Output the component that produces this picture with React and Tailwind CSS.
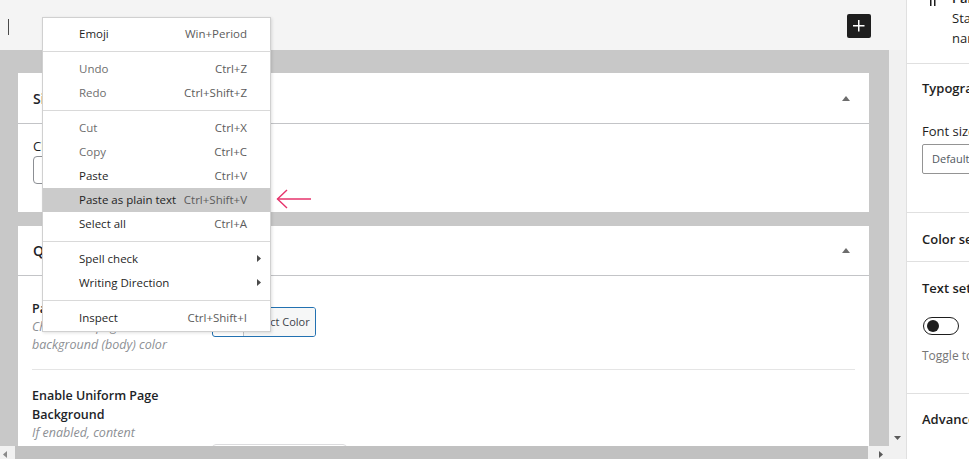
import React from "react";

function Tri() {
  return (
    <svg width="8" height="5" viewBox="0 0 8 5" className="shrink-0">
      <polygon points="0,5 4,0 8,5" fill="#6d6d6d" />
    </svg>
  );
}

function MenuItem({ label, shortcut, disabled, active, submenu }) {
  return (
    <div
      className={
        "relative flex h-6 items-center justify-between pl-[36px] pr-[23px] " +
        (active ? "bg-[#cbcbcb]" : "")
      }
    >
      <span className={disabled ? "text-[#6e6e6e]" : "text-[#1f1f1f]"}>{label}</span>
      {shortcut ? <span className="text-[#5c5c5c]">{shortcut}</span> : null}
      {submenu ? (
        <svg width="4" height="7" viewBox="0 0 4 7" className="absolute right-[9px] top-[8px]">
          <polygon points="0,0 4,3.5 0,7" fill="#4a4a4a" />
        </svg>
      ) : null}
    </div>
  );
}

function Sep() {
  return <div className="my-[5px] h-px bg-[#d9d9d9]" />;
}

export default function App() {
  return (
    <div className="relative flex h-[459px] w-[969px] overflow-hidden bg-white font-['Open_Sans',sans-serif] text-[13px] text-[#1e1e1e]">
      {/* Editor column */}
      <div className="flex w-[906px] shrink-0 flex-col">
        {/* Header */}
        <div className="flex h-[50px] shrink-0 items-center justify-between bg-[#f4f4f4] pl-2 pr-[35px]">
          <div className="mt-[4px] h-[16px] w-px bg-[#4a4a4a]" />
          <div className="mt-[2px] flex h-6 w-6 items-center justify-center rounded-[2px] bg-[#1e1e1e]">
            <svg width="24" height="24" viewBox="0 0 24 24">
              <path d="M11 12.5V17.5H12.5V12.5H17.5V11H12.5V6H11V11H6V12.5H11Z" fill="#fff" />
            </svg>
          </div>
        </div>

        {/* Body with scrollbars */}
        <div className="grid grid-cols-[889px_17px] grid-rows-[396px_13px]">
          {/* Canvas */}
          <div className="overflow-hidden bg-[#c8c8c8] pl-[18px] pr-[20px] pt-[23px]">
            {/* Panel 1 */}
            <div className="bg-white">
              <div className="flex h-[51px] items-center justify-between border-b border-[#c3c4c7] pl-[15px] pr-[19px]">
                <span className="text-[14px] font-semibold text-[#1d2327]">Site Layout</span>
                <Tri />
              </div>
              <div className="px-[15px] pb-[28px] pt-[12px]">
                <div className="leading-[20px] text-[#1d2327]">Choose Layout</div>
                <div className="h-[28px] w-[200px] rounded-[4px] border border-[#8c8f94]" />
              </div>
            </div>

            {/* Panel 2 */}
            <div className="mt-[14px] bg-white">
              <div className="flex h-[50px] items-center justify-between border-b border-[#c3c4c7] pl-[15px] pr-[19px]">
                <span className="text-[14px] font-semibold text-[#1d2327]">Quick Settings</span>
                <Tri />
              </div>
              <div className="px-[14px]">
                <div className="flex border-b border-[#e5e5e5] pb-[15px] pt-[24px]">
                  <div className="mr-[15px] w-[165px] shrink-0">
                    <div className="text-[12.5px] font-semibold leading-[18px] text-[#1d2327]">Page Background Color</div>
                    <div className="text-[12.5px] italic leading-[18px] text-[#8c8f94]">
                      Choose the page
                      <br />
                      background (body) color
                    </div>
                  </div>
                  <div className="mt-[7px] flex h-[30px] self-start overflow-hidden rounded-[3px] border border-[#2271b1] bg-white pl-[30px]">
                    <span className="border-l border-[#c3c4c7] bg-[#f6f7f7] px-[5px] text-[11px] leading-[28px] text-[#3c434a]">
                      Select Color
                    </span>
                  </div>
                </div>
                <div className="flex pt-[16px]">
                  <div className="mr-[15px] w-[165px] shrink-0">
                    <div className="text-[12.5px] font-semibold leading-[19px] text-[#1d2327]">Enable Uniform Page Background</div>
                    <div className="text-[12.5px] italic leading-[18px] text-[#8c8f94]">If enabled, content</div>
                  </div>
                  <div className="mt-[58px] h-[30px] w-[135px] rounded-[4px] border border-[#dcdcde]" />
                </div>
              </div>
            </div>
          </div>

          {/* Vertical scrollbar */}
          <div className="flex flex-col justify-end bg-[#f1f1f1]">
            <div className="flex h-[17px] items-center justify-center">
              <svg width="7" height="4" viewBox="0 0 7 4">
                <polygon points="0,0 7,0 3.5,4" fill="#5a5a5a" />
              </svg>
            </div>
          </div>

          {/* Horizontal scrollbar */}
          <div className="flex bg-[#f1f1f1]">
            <div className="flex h-[17px] w-[15px] shrink-0 items-center pl-[3px]">
              <svg width="4" height="7" viewBox="0 0 4 7">
                <polygon points="4,0 0,3.5 4,7" fill="#8a8a8a" />
              </svg>
            </div>
            <div className="h-full flex-1 bg-[#c1c1c1]" />
            <div className="w-[4px] shrink-0" />
            <div className="flex h-[17px] w-[17px] shrink-0 items-center justify-center">
              <svg width="4" height="7" viewBox="0 0 4 7">
                <polygon points="0,0 4,3.5 0,7" fill="#5a5a5a" />
              </svg>
            </div>
          </div>
          <div className="bg-[#f1f1f1]" />
        </div>
      </div>

      {/* Sidebar */}
      <div className="w-[280px] shrink-0 border-l border-[#e0e0e0] bg-white">
        <div className="-mt-[12px] flex border-b border-[#e0e0e0] pb-[15px] pl-[13px]">
          <svg width="24" height="24" viewBox="0 0 24 24" className="-mt-[2px] shrink-0">
            <path
              d="M9.99609 14V13.7751L10 13.7752V20H11.5V5.5H14V20H15.5V5.5H18.5V4H10C7.23858 4 5 6.23858 5 9C5 11.7614 7.23858 14 9.99609 14Z"
              fill="#1e1e1e"
            />
          </svg>
          <div className="ml-[8px] whitespace-nowrap">
            <div className="font-semibold leading-[20px]">Paragraph</div>
            <div className="leading-[20px]">Start with the basic building block of all</div>
            <div className="leading-[20px]">narrative.</div>
          </div>
        </div>

        <div className="border-b border-[#e0e0e0] px-[15px] pb-[38px] pt-[14px]">
          <div className="whitespace-nowrap font-semibold leading-[20px]">Typography</div>
          <div className="mt-[25px] leading-[16px]">Font size</div>
          <div className="mt-[5px] flex h-[30px] items-center rounded-[2px] border border-[#949494] pl-[9px] text-[11px] text-[#50575e]">
            Default
          </div>
        </div>

        <div className="border-b border-[#e0e0e0] px-[15px] pb-[12px] pt-[16px]">
          <div className="whitespace-nowrap font-semibold leading-[20px]">Color settings</div>
        </div>

        <div className="border-b border-[#e0e0e0] px-[15px] pb-[29px] pt-[16px]">
          <div className="whitespace-nowrap font-semibold leading-[20px]">Text settings</div>
          <div className="ml-[1px] mt-[19px] flex h-[18px] w-[36px] items-center rounded-full border border-[#1e1e1e] pl-[3px]">
            <div className="h-[12px] w-[12px] rounded-full bg-[#1e1e1e]" />
          </div>
          <div className="mt-[13px] whitespace-nowrap text-[12px] leading-[16px] text-[#757575]">
            Toggle to show a large initial letter.
          </div>
        </div>

        <div className="px-[15px] pt-[15px]">
          <div className="whitespace-nowrap font-semibold leading-[20px]">Advanced</div>
        </div>
      </div>

      {/* Context menu */}
      <div className="absolute left-[42px] top-[17px] w-[229px] border border-[#d0d0d0] bg-white pb-px pt-1 text-[11.5px] shadow-[1px_1px_3px_rgba(0,0,0,0.12)]">
        <MenuItem label="Emoji" shortcut="Win+Period" />
        <Sep />
        <MenuItem label="Undo" shortcut="Ctrl+Z" disabled />
        <MenuItem label="Redo" shortcut="Ctrl+Shift+Z" disabled />
        <Sep />
        <MenuItem label="Cut" shortcut="Ctrl+X" disabled />
        <MenuItem label="Copy" shortcut="Ctrl+C" disabled />
        <MenuItem label="Paste" shortcut="Ctrl+V" />
        <MenuItem label="Paste as plain text" shortcut="Ctrl+Shift+V" active />
        <MenuItem label="Select all" shortcut="Ctrl+A" />
        <Sep />
        <MenuItem label="Spell check" submenu />
        <MenuItem label="Writing Direction" submenu />
        <Sep />
        <MenuItem label="Inspect" shortcut="Ctrl+Shift+I" />
      </div>

      {/* Red arrow annotation */}
      <svg width="38" height="22" viewBox="0 0 38 22" className="absolute left-[275px] top-[188px]">
        <path d="M36 11H2.5" stroke="#e6336b" strokeWidth="1.4" fill="none" />
        <path d="M12 2L2.5 11L12 20" stroke="#e6336b" strokeWidth="1.4" fill="none" strokeLinejoin="miter" />
      </svg>
    </div>
  );
}
